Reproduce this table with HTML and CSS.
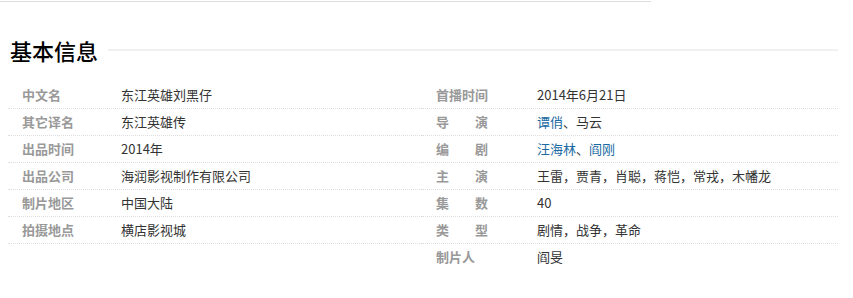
FILE: index.html
```html
<!DOCTYPE html>
<html lang="zh-CN">
<head>
<meta charset="utf-8">
<link rel="stylesheet" href="styles.css">
</head>
<body>
<div class="topline"></div>
<h2 class="title"><span class="title-text">基本信息</span></h2>
<div class="info">
  <dl class="col col-left">
    <div class="row"><dt class="label">中文名</dt><dd class="value">东江英雄刘黑仔</dd></div>
    <div class="row"><dt class="label">其它译名</dt><dd class="value">东江英雄传</dd></div>
    <div class="row"><dt class="label">出品时间</dt><dd class="value">2014年</dd></div>
    <div class="row"><dt class="label">出品公司</dt><dd class="value">海润影视制作有限公司</dd></div>
    <div class="row"><dt class="label">制片地区</dt><dd class="value">中国大陆</dd></div>
    <div class="row"><dt class="label">拍摄地点</dt><dd class="value">横店影视城</dd></div>
  </dl>
  <dl class="col col-right">
    <div class="row"><dt class="label">首播时间</dt><dd class="value">2014年6月21日</dd></div>
    <div class="row"><dt class="label"><span class="spread">导演</span></dt><dd class="value"><a class="link" href="#">谭俏</a>、马云</dd></div>
    <div class="row"><dt class="label"><span class="spread">编剧</span></dt><dd class="value"><a class="link" href="#">汪海林</a>、<a class="link" href="#">阎刚</a></dd></div>
    <div class="row"><dt class="label"><span class="spread">主演</span></dt><dd class="value">王雷，贾青，肖聪，蒋恺，常戎，木幡龙</dd></div>
    <div class="row"><dt class="label"><span class="spread">集数</span></dt><dd class="value">40</dd></div>
    <div class="row"><dt class="label"><span class="spread">类型</span></dt><dd class="value">剧情，战争，革命</dd></div>
    <div class="row row-last"><dt class="label">制片人</dt><dd class="value">阎旻</dd></div>
  </dl>
</div>
</body>
</html>
```
FILE: styles.css
```css
html, body {
  margin: 0;
  padding: 0;
  background: #fff;
}
body {
  font-family: "Noto Sans CJK SC", "Liberation Sans", sans-serif;
  font-size: 13px;
  color: #333;
}
.topline {
  margin-top: 1px;
  width: 651px;
  border-top: 1px solid #dcdcdc;
}
.title {
  display: flex;
  align-items: center;
  margin: 33px 15px 17px 10px;
  height: 30px;
  font-size: 22px;
  font-weight: 500;
  color: #000;
  line-height: 30px;
}
.title::after {
  content: "";
  flex: 1;
  height: 2px;
  background: #f0f0f0;
  margin-left: 10px;
}
.info {
  display: flex;
  margin-left: 8px;
  width: 830px;
}
.col {
  margin: 0;
  padding: 0;
}
.col-left {
  width: 414px;
}
.col-right {
  width: 416px;
}
.row {
  display: flex;
  height: 26px;
  line-height: 26px;
  border-bottom: 1px dotted #dedede;
}
.row-last {
  border-bottom: 1px solid transparent;
}
.label {
  box-sizing: border-box;
  width: 113px;
  padding-left: 14px;
  font-weight: bold;
  color: #999;
  flex: none;
}
.col-right .label {
  width: 115px;
}
.spread {
  display: inline-block;
  width: 52px;
  text-align: justify;
  text-align-last: justify;
}
.value {
  margin: 0;
  color: #333;
  white-space: nowrap;
}
.link {
  color: #1a6aa3;
  text-decoration: none;
}
```
